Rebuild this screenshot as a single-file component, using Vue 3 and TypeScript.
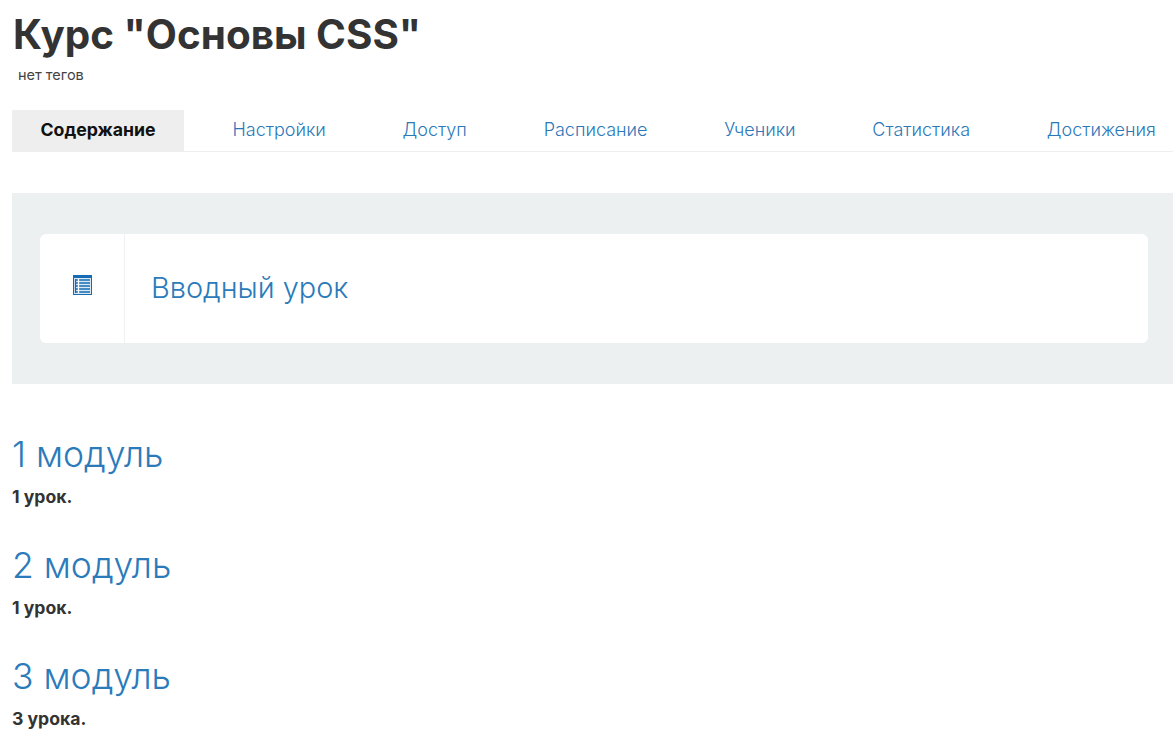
<script setup lang="ts">
const tabs: string[] = ['Настройки', 'Доступ', 'Расписание', 'Ученики', 'Статистика', 'Достижения']
const modules = [
  { title: '1 модуль', lessons: '1 урок.' },
  { title: '2 модуль', lessons: '1 урок.' },
  { title: '3 модуль', lessons: '3 урока.' },
]
</script>

<template>
  <div class="page">
    <h1 class="title">Курс "Основы CSS"</h1>
    <div class="tags">нет тегов</div>
    <nav class="tabs">
      <a class="tab active">Содержание</a>
      <a v-for="t in tabs" :key="t" class="tab">{{ t }}</a>
    </nav>
    <section class="panel">
      <div class="card">
        <div class="card-icon">
          <svg width="19" height="20" viewBox="0 0 19 20">
            <rect x="0" y="0" width="19" height="20" fill="#156cb3" />
            <rect x="1" y="3" width="17" height="16" fill="#d8e8f5" />
            <path d="M3 5h14M3 8h14M3 11h14M3 14h14M3 17h14" stroke="#156cb3" stroke-width="1.6" />
            <path d="M5.5 3.5v15" stroke="#ffffff" stroke-width="1.3" />
            <path d="M2.5 4v14" stroke="#156cb3" stroke-width="1.2" />
          </svg>
        </div>
        <a class="card-title">Вводный урок</a>
      </div>
    </section>
    <section v-for="m in modules" :key="m.title" class="module">
      <a class="module-title">{{ m.title }}</a>
      <div class="module-sub">{{ m.lessons }}</div>
    </section>
  </div>
</template>

<style>
html, body { margin: 0; overflow: hidden; background: #fff; }
</style>

<style scoped>
.page {
  width: 1173px;
  height: 736px;
  overflow: hidden;
  box-sizing: border-box;
  padding-left: 12px;
  font-family: Inter, "Open Sans", sans-serif;
  color: #333;
}
.title {
  margin: 0;
  padding-top: 11px;
  padding-left: 1px;
  font-size: 40.4px;
  line-height: 47px;
  font-weight: 700;
  white-space: nowrap;
}
.tags {
  margin: 9px 0 0 6px;
  font-size: 14.5px;
  line-height: 16px;
  color: #444;
}
.tabs {
  display: flex;
  gap: 19.8px;
  margin-top: 27px;
  height: 41px;
  border-bottom: 1px solid #eee;
  white-space: nowrap;
}
.tab {
  display: block;
  flex: none;
  padding: 0 28.5px;
  height: 42px;
  line-height: 40px;
  font-size: 18px;
  font-weight: 350;
  color: #2b78b8;
}
.tab.active {
  background: #eee;
  color: #111;
  font-size: 17.7px;
  font-weight: 700;
}
.panel {
  margin-top: 41px;
  background: #ecf0f1;
  padding: 41px 25px 41px 28px;
}
.card {
  display: flex;
  height: 109px;
  background: #fff;
  border-radius: 6px;
}
.card-icon {
  width: 85px;
  flex: none;
  border-right: 1px solid #eef0f1;
  display: flex;
  align-items: center;
  justify-content: center;
  padding-bottom: 8px;
  box-sizing: border-box;
}
.card-title {
  margin-left: 26px;
  font-size: 28.9px;
  font-weight: 300;
  line-height: 107px;
  color: #2b7bba;
}
.module {
  margin-top: 49px;
}
.module + .module {
  margin-top: 37.5px;
}
.module-title {
  display: block;
  font-size: 35.5px;
  font-weight: 300;
  line-height: 44px;
  color: #2b7bba;
}
.module-sub {
  margin-top: 9.5px;
  font-size: 17.6px;
  line-height: 20px;
  font-weight: 700;
  color: #333;
}
</style>
